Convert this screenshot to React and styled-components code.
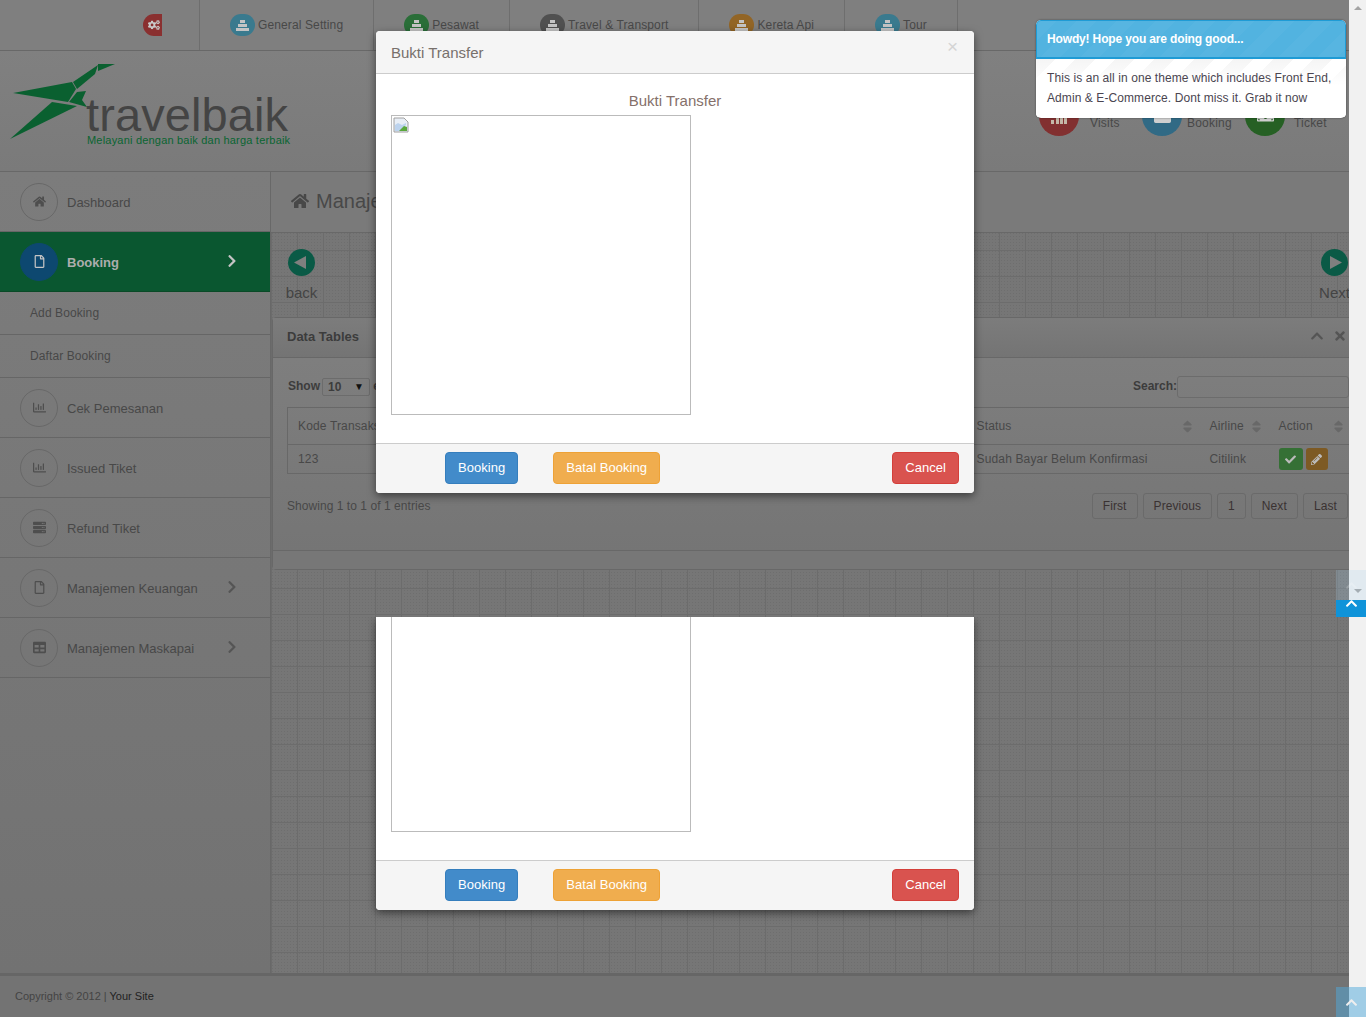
import {
  FaCheck,
  FaChevronRight,
  FaChevronUp,
  FaCogs,
  FaFolder,
  FaHome,
  FaMoneyBill,
  FaPencilAlt,
  FaRegChartBar,
  FaRegFile,
  FaServer,
  FaSort,
  FaTable,
  FaTimes,
} from "react-icons/fa";
import styled, { createGlobalStyle } from "styled-components";

const GlobalStyle = createGlobalStyle`
  html, body {
    margin: 0;
    height: 1017px;
    overflow: hidden;
    font-family: "Liberation Sans", Arial, sans-serif;
    font-size: 12px;
    color: #484848;
  }
  * { box-sizing: border-box; }
`;

const Screen = styled.div`
  position: relative;
  width: 1366px;
  height: 1017px;
  display: flex;
  overflow: hidden;
`;

const Page = styled.div`
  width: 1349px;
  height: 1017px;
  display: flex;
  flex-direction: column;
  overflow: hidden;
  background: #787878;
`;

/* top nav */
const TopBar = styled.nav`
  height: 51px;
  flex: none;
  display: flex;
  background: #7f7f7f;
  border-bottom: 1px solid #686868;
`;

const HomeCell = styled.div`
  width: 200px;
  padding: 14px 0 0 143px;
  border-right: 1px solid #6e6e6e;
`;

const RedTile = styled.div`
  width: 19px;
  height: 22px;
  border-radius: 11px 0 0 11px;
  background: #8a3030;
  color: #c9c9c9;
  font-size: 12px;
  display: flex;
  align-items: center;
  justify-content: center;
  padding-left: 3px;
`;

const NavItem = styled.div`
  display: flex;
  align-items: flex-start;
  gap: 3px;
  padding: 14px 30px 0;
  border-right: 1px solid #6e6e6e;
  letter-spacing: 0.12px;
  line-height: 22px;
`;

const NavDot = styled.div`
  width: 25px;
  height: 22px;
  border-radius: 12px;
  background: ${(p) => p.$color};
  display: flex;
  align-items: center;
  justify-content: center;
`;

/* logo row */
const Masthead = styled.header`
  height: 121px;
  flex: none;
  display: flex;
  justify-content: space-between;
  background: linear-gradient(#808080, #7a7a7a);
  border-bottom: 1px solid #686868;
`;

const Logo = styled.div`
  display: grid;
  width: 300px;
  height: 120px;
  & > * {
    grid-area: 1 / 1;
  }
`;

const LogoText = styled.div`
  padding: 45px 0 0 86px;
  color: #444;
  font-size: 47px;
  line-height: 38px;
  letter-spacing: 0.1px;
`;

const LogoTag = styled.div`
  padding: 83px 0 0 87px;
  color: #0a6532;
  font-size: 11px;
  line-height: 12px;
  letter-spacing: 0.2px;
  white-space: nowrap;
`;

const Stats = styled.div`
  display: flex;
  padding: 45px 0 0;
  width: 310px;
`;

const Stat = styled.div`
  width: 103px;
  height: 40px;
  display: flex;
  gap: ${(p) => p.$gap}px;
  font-size: 12px;
  letter-spacing: 0.2px;
`;

const StatDot = styled.div`
  width: 40px;
  height: 40px;
  flex: none;
  border-radius: 50%;
  background: ${(p) => p.$color};
  color: #cfcfcf;
  font-size: 17px;
  display: flex;
  align-items: center;
  justify-content: center;
`;

const StatLabel = styled.span`
  padding-top: 19px;
  line-height: 16px;
`;

/* body */
const Body = styled.div`
  flex: 1;
  display: flex;
  min-height: 0;
`;

const Sidebar = styled.aside`
  width: 271px;
  flex: none;
  background: linear-gradient(#7c7c7c, #727272);
  border-right: 1px solid #686868;
`;

const MenuItem = styled.div`
  height: 60px;
  display: flex;
  align-items: center;
  padding: 0 31px 0 20px;
  gap: 9px;
  border-bottom: 1px solid ${(p) => (p.$active ? "#0a4a27" : "#666")};
  background: ${(p) => (p.$active ? "#0a5730" : "transparent")};
  color: ${(p) => (p.$active ? "#adadad" : "#484848")};
  font-weight: ${(p) => (p.$active ? "bold" : "normal")};
  font-size: 13px;
`;

const MenuCircle = styled.div`
  width: 38px;
  height: 38px;
  flex: none;
  border-radius: 50%;
  border: 1px solid ${(p) => (p.$active ? "#0d4870" : "#686868")};
  background: ${(p) => (p.$active ? "#0d4870" : "transparent")};
  color: ${(p) => (p.$active ? "#c4c4c4" : "#4e4e4e")};
  font-size: 13px;
  display: flex;
  align-items: center;
  justify-content: center;
`;

const MenuLabel = styled.span`
  flex: 1;
  padding-top: 2px;
`;

const MenuArrow = styled.span`
  font-size: 14px;
  color: ${(p) => (p.$active ? "#c4c4c4" : "#555")};
  display: flex;
  margin-top: -2px;
`;

const SubItem = styled.div`
  height: 43px;
  padding: 0 0 0 30px;
  display: flex;
  align-items: center;
  border-bottom: 1px solid #666;
  letter-spacing: 0.1px;
`;

const Main = styled.main`
  flex: 1;
  min-width: 0;
  display: flex;
  flex-direction: column;
  overflow: hidden;
  background-color: #767676;
  background-image: linear-gradient(#6c6c6c 1px, transparent 1px),
    linear-gradient(90deg, #6c6c6c 1px, transparent 1px),
    radial-gradient(#6e6e6e 0.8px, transparent 1px);
  background-size: 26px 26px, 26px 26px, 3px 3px;
`;

const PageHead = styled.div`
  height: 61px;
  flex: none;
  padding: 0 0 2px 20px;
  display: flex;
  align-items: center;
  gap: 7px;
  background: #7a7a7a;
  border-bottom: 1px solid #686868;
  font-size: 20px;
  color: #484848;
  white-space: nowrap;
  svg {
    font-size: 18px;
  }
`;

const PagerRow = styled.div`
  width: 1080px;
  height: 84px;
  flex: none;
  display: flex;
  justify-content: space-between;
  padding: 16px 0 0 14px;
`;

const PagerLink = styled.div`
  width: 33px;
  display: flex;
  flex-direction: column;
  align-items: center;
  gap: 8px;
  font-size: 15px;
  line-height: 18px;
  color: #444;
`;

const Panel = styled.section`
  width: 1093px;
  flex: none;
  margin-left: 1px;
  border: 1px solid #686868;
  border-radius: 4px;
  background: #7a7a7a;
`;

const PanelHead = styled.div`
  height: 40px;
  display: flex;
  align-items: center;
  justify-content: space-between;
  padding: 0 17px 3px 14px;
  border-bottom: 1px solid #686868;
  background: linear-gradient(#7c7c7c, #747474);
`;

const PanelTitle = styled.h2`
  margin: 0;
  font-size: 13px;
  color: #3c3c3c;
`;

const PanelTools = styled.div`
  display: flex;
  gap: 9px;
  color: #555;
  font-size: 14px;
`;

const PanelBody = styled.div`
  height: 193px;
  padding: 17px 15px 0 14px;
  background: linear-gradient(#7e7e7e, #757575);
  border-bottom: 1px solid #686868;
`;

const ToolRow = styled.div`
  height: 22px;
  padding: 1px 0 0 1px;
  display: flex;
  justify-content: space-between;
  align-items: center;
  font-weight: bold;
  color: #3c3c3c;
  small {
    font-size: 10px;
    color: #111;
  }
`;

const LenSelect = styled.span`
  display: inline-flex;
  justify-content: space-between;
  align-items: center;
  width: 48px;
  height: 18px;
  margin-left: 2px;
  padding: 0 5px;
  border: 1px solid #6c6c6c;
  border-radius: 2px;
  vertical-align: middle;
`;

const SearchBox = styled.span`
  display: inline-block;
  width: 172px;
  height: 22px;
  border: 1px solid #6c6c6c;
  border-radius: 3px;
  vertical-align: middle;
`;

const Table = styled.table`
  width: 1063px;
  margin-top: 10px;
  table-layout: fixed;
  border-collapse: collapse;
  border: 1px solid #686868;
  border-right: 0;
  letter-spacing: 0.15px;
`;

const HeadCell = styled.th`
  height: 37px;
  padding: 0 5px 0 10px;
  text-align: left;
  font-weight: normal;
  border-bottom: 1px solid #686868;
  white-space: nowrap;
`;

const HeadInner = styled.div`
  display: flex;
  align-items: center;
  justify-content: space-between;
  svg {
    color: #686868;
    font-size: 15px;
  }
`;

const Cell = styled.td`
  height: 29px;
  padding: 0 10px;
  border-bottom: 1px solid #686868;
`;

const ActionBtn = styled.span`
  display: inline-flex;
  align-items: center;
  justify-content: center;
  width: ${(p) => p.$w}px;
  height: 22px;
  margin-right: 3px;
  border-radius: 3px;
  background: ${(p) => p.$color};
  color: #bbb;
  font-size: 11px;
  vertical-align: middle;
`;

const FootRow = styled.div`
  display: flex;
  justify-content: space-between;
  margin-top: 19px;
  letter-spacing: 0.05px;
`;

const Showing = styled.span`
  padding-top: 6px;
`;

const PageButtons = styled.div`
  display: flex;
  gap: 5px;
  padding-right: 1px;
  letter-spacing: 0.1px;
`;

const PageBtn = styled.span`
  height: 26px;
  padding: 0 10px;
  display: flex;
  align-items: center;
  border: 1px solid #6a6a6a;
  border-radius: 3px;
  color: #3a3232;
`;

const PanelFoot = styled.div`
  height: 18px;
  background: #777;
`;

const Footer = styled.footer`
  height: 44px;
  flex: none;
  padding: 13px 15px 0;
  border-top: 3px solid #666;
  background: #737373;
  font-size: 11px;
  line-height: 14px;
  color: #444;
  b {
    font-weight: normal;
    color: #222;
  }
`;

const ScrollTrack = styled.div`
  width: 17px;
  flex: none;
  display: flex;
  flex-direction: column;
  align-items: center;
  background: #f1f1f1;
`;

const ScrollArrow = styled.i`
  width: 0;
  height: 0;
  margin-top: ${(p) => p.$top}px;
  border-left: 4px solid transparent;
  border-right: 4px solid transparent;
  ${(p) =>
    p.$down
      ? "border-top: 4px solid #a3a3a3;"
      : "border-bottom: 4px solid #a3a3a3;"}
`;

/* things that lie over the page */
const Modal = styled.div`
  position: absolute;
  left: 376px;
  width: 598px;
  top: ${(p) => p.$top}px;
  height: ${(p) => p.$height}px;
  display: flex;
  flex-direction: column;
  background: #fff;
  border-radius: ${(p) => (p.$cut ? "0 0 4px 4px" : "4px")};
  box-shadow: 0 3px 9px rgba(0, 0, 0, 0.5);
  ${(p) => p.$cut && "clip-path: inset(0 -20px -20px -20px);"}
`;

const ModalHead = styled.div`
  height: 43px;
  flex: none;
  display: flex;
  justify-content: space-between;
  padding: 13px 15px 0;
  background: #f5f5f5;
  border-bottom: 1px solid #ccc;
  border-radius: 4px 4px 0 0;
  color: #77706c;
  font-size: 15px;
  line-height: 18px;
`;

const CloseBtn = styled.span`
  margin: -7px 1px 0 0;
  font-size: 19px;
  line-height: 20px;
  color: #d4d4d4;
`;

const ModalBody = styled.div`
  flex: 1;
  min-height: 0;
  padding: 0 15px;
`;

const ProofTitle = styled.h4`
  margin: 0;
  padding-top: 19px;
  text-align: center;
  height: 41px;
  font-size: 15px;
  font-weight: normal;
  line-height: 16px;
  color: #85706a;
`;

const ProofImage = styled.div`
  width: 300px;
  height: ${(p) => p.$height}px;
  border: 1px solid #bbb;
  ${(p) => p.$cut && "border-top: 0;"}
  padding: 1px 0 0 1px;
`;

const ModalFoot = styled.div`
  height: 50px;
  flex: none;
  display: flex;
  align-items: center;
  padding: 0 15px 2px 69px;
  background: #f5f5f5;
  border-top: 1px solid #ccc;
  border-radius: 0 0 4px 4px;
`;

const Button = styled.button`
  height: 32px;
  padding: 0 12px;
  margin-right: ${(p) => p.$mr || 0}px;
  margin-left: ${(p) => (p.$push ? "auto" : 0)};
  border: 1px solid ${(p) => p.$border};
  border-radius: 4px;
  background: ${(p) => p.$color};
  color: #fff;
  font-family: inherit;
  font-size: 13px;
  letter-spacing: 0.04px;
`;

const Toast = styled.div`
  position: absolute;
  left: 1036px;
  top: 20px;
  width: 310px;
  height: 98px;
  border-radius: 5px;
  background: #fff;
  box-shadow: 0 0 2px rgba(0, 0, 0, 0.5);
  overflow: hidden;
`;

const ToastHead = styled.div`
  height: 39px;
  padding: 0 10px;
  display: flex;
  align-items: center;
  border: 1px solid #1f9bd5;
  border-radius: 5px 5px 0 0;
  border-bottom-width: 2px;
  background-color: #52b3e0;
  background-image: repeating-linear-gradient(
    135deg,
    rgba(255, 255, 255, 0.03) 0 14px,
    transparent 14px 28px
  );
  color: #fff;
  font-weight: bold;
  letter-spacing: -0.15px;
`;

const ToastBody = styled.div`
  padding: 9px 11px;
  font-size: 12px;
  line-height: 20px;
  color: #4a4550;
  letter-spacing: 0.08px;
  background-image: linear-gradient(rgba(255, 255, 255, 0), #fff 26px),
    repeating-linear-gradient(135deg, #f5f5f5 0 14px, transparent 14px 28px);
`;

const ScrollTop = styled.div`
  position: absolute;
  left: 1336px;
  width: 30px;
  top: ${(p) => p.$top}px;
  height: ${(p) => p.$height}px;
  display: flex;
  justify-content: center;
  align-items: ${(p) => p.$align || "center"};
  background: ${(p) => p.$bg};
  color: ${(p) => p.$ink};
  font-size: 13px;
  svg {
    margin-top: ${(p) => p.$shift || 0}px;
  }
`;

const NavGlyph = () => (
  <svg width="13" height="11" viewBox="0 0 13 11" fill="#c4c4c4">
    <rect x="4" y="0" width="5" height="3" />
    <rect x="2" y="4" width="9" height="3" />
    <rect x="0" y="8" width="13" height="3" />
  </svg>
);

const LogoMark = () => (
  <svg width="300" height="120" viewBox="0 51 300 120" fill="#0a6030">
    <polygon points="98,64 115,64 98,71" />
    <polygon points="98,65 73,82 77,89 95,74" />
    <polygon points="13,93 72,82 76,89 68,102" />
    <polygon points="86,91 77,92 69,102 87,107 82,100" />
    <polygon points="52,102 77,106 10,139" />
  </svg>
);

const VisitBars = () => (
  <svg width="18" height="18" viewBox="0 0 18 18" fill="#c4b8a8">
    <rect x="1" y="13" width="3" height="4" />
    <rect x="6" y="10" width="3" height="7" />
    <rect x="10" y="9" width="3" height="8" />
    <rect x="14" y="9" width="3" height="8" />
  </svg>
);

const RoundPlay = ({ back }) => (
  <svg width="27" height="27" viewBox="0 0 27 27">
    <circle cx="13.5" cy="13.5" r="13.5" fill="#0a5a46" />
    <polygon
      points={back ? "6,13.5 18,7 18,20" : "21,13.5 9,7 9,20"}
      fill="#7f7f7f"
    />
  </svg>
);

const BrokenImage = () => (
  <svg width="16" height="16" viewBox="0 0 16 16">
    <path d="M1 1h10l4 4v10H1z" fill="#e8eef6" stroke="#a0a0a0" />
    <path d="M2 8l3-2 4 2 4-2v2l-6 6H2z" fill="#bcd3ee" />
    <path d="M6 14l5-5 3 1v4z" fill="#5aa83c" />
  </svg>
);

const navItems = [
  { label: "General Setting", color: "#3a7a8e" },
  { label: "Pesawat", color: "#2a6e38" },
  { label: "Travel & Transport", color: "#505050" },
  { label: "Kereta Api", color: "#926526" },
  { label: "Tour", color: "#3a7a8e" },
];

const ProofFooter = () => (
  <ModalFoot>
    <Button $color="#428bca" $border="#357ebd" $mr={35}>
      Booking
    </Button>
    <Button $color="#f0ad4e" $border="#eea236">
      Batal Booking
    </Button>
    <Button $color="#d9534f" $border="#d43f3a" $push>
      Cancel
    </Button>
  </ModalFoot>
);

const App = () => {
  return (
    <Screen>
      <GlobalStyle />
      <Page>
        <TopBar>
          <HomeCell>
            <RedTile>
              <FaCogs />
            </RedTile>
          </HomeCell>
          {navItems.map((item) => (
            <NavItem key={item.label}>
              <NavDot $color={item.color}>
                <NavGlyph />
              </NavDot>
              {item.label}
            </NavItem>
          ))}
        </TopBar>

        <Masthead>
          <Logo>
            <LogoMark />
            <LogoText>travelbaik</LogoText>
            <LogoTag>Melayani dengan baik dan harga terbaik</LogoTag>
          </Logo>
          <Stats>
            <Stat $gap={11}>
              <StatDot $color="#823030">
                <VisitBars />
              </StatDot>
              <StatLabel>Visits</StatLabel>
            </Stat>
            <Stat $gap={5}>
              <StatDot $color="#316a85">
                <FaFolder />
              </StatDot>
              <StatLabel>Booking</StatLabel>
            </Stat>
            <Stat $gap={9}>
              <StatDot $color="#266024">
                <FaMoneyBill />
              </StatDot>
              <StatLabel>Ticket</StatLabel>
            </Stat>
          </Stats>
        </Masthead>

        <Body>
          <Sidebar>
            <MenuItem>
              <MenuCircle>
                <FaHome />
              </MenuCircle>
              <MenuLabel>Dashboard</MenuLabel>
            </MenuItem>
            <MenuItem $active>
              <MenuCircle $active>
                <FaRegFile />
              </MenuCircle>
              <MenuLabel>Booking</MenuLabel>
              <MenuArrow $active>
                <FaChevronRight />
              </MenuArrow>
            </MenuItem>
            <SubItem>Add Booking</SubItem>
            <SubItem>Daftar Booking</SubItem>
            <MenuItem>
              <MenuCircle>
                <FaRegChartBar />
              </MenuCircle>
              <MenuLabel>Cek Pemesanan</MenuLabel>
            </MenuItem>
            <MenuItem>
              <MenuCircle>
                <FaRegChartBar />
              </MenuCircle>
              <MenuLabel>Issued Tiket</MenuLabel>
            </MenuItem>
            <MenuItem>
              <MenuCircle>
                <FaServer />
              </MenuCircle>
              <MenuLabel>Refund Tiket</MenuLabel>
            </MenuItem>
            <MenuItem>
              <MenuCircle>
                <FaRegFile />
              </MenuCircle>
              <MenuLabel>Manajemen Keuangan</MenuLabel>
              <MenuArrow>
                <FaChevronRight />
              </MenuArrow>
            </MenuItem>
            <MenuItem>
              <MenuCircle>
                <FaTable />
              </MenuCircle>
              <MenuLabel>Manajemen Maskapai</MenuLabel>
              <MenuArrow>
                <FaChevronRight />
              </MenuArrow>
            </MenuItem>
          </Sidebar>

          <Main>
            <PageHead>
              <FaHome />
              Manajemen Booking
            </PageHead>
            <PagerRow>
              <PagerLink>
                <RoundPlay back />
                back
              </PagerLink>
              <PagerLink>
                <RoundPlay />
                Next
              </PagerLink>
            </PagerRow>
            <Panel>
              <PanelHead>
                <PanelTitle>Data Tables</PanelTitle>
                <PanelTools>
                  <FaChevronUp />
                  <FaTimes />
                </PanelTools>
              </PanelHead>
              <PanelBody>
                <ToolRow>
                  <span>
                    Show
                    <LenSelect>
                      10 <small>▼</small>
                    </LenSelect>{" "}
                    entries
                  </span>
                  <span>
                    Search:
                    <SearchBox />
                  </span>
                </ToolRow>
                <Table>
                  <colgroup>
                    <col style={{ width: 679 }} />
                    <col style={{ width: 233 }} />
                    <col style={{ width: 69 }} />
                    <col style={{ width: 82 }} />
                  </colgroup>
                  <thead>
                    <tr>
                      <HeadCell>
                        <HeadInner>
                          Kode Transaksi <FaSort />
                        </HeadInner>
                      </HeadCell>
                      <HeadCell>
                        <HeadInner>
                          Status <FaSort />
                        </HeadInner>
                      </HeadCell>
                      <HeadCell>
                        <HeadInner>
                          Airline <FaSort />
                        </HeadInner>
                      </HeadCell>
                      <HeadCell>
                        <HeadInner>
                          Action <FaSort />
                        </HeadInner>
                      </HeadCell>
                    </tr>
                  </thead>
                  <tbody>
                    <tr>
                      <Cell>123</Cell>
                      <Cell>Sudah Bayar Belum Konfirmasi</Cell>
                      <Cell>Citilink</Cell>
                      <Cell>
                        <ActionBtn $w={24} $color="#357035">
                          <FaCheck />
                        </ActionBtn>
                        <ActionBtn $w={22} $color="#7d5a24">
                          <FaPencilAlt />
                        </ActionBtn>
                      </Cell>
                    </tr>
                  </tbody>
                </Table>
                <FootRow>
                  <Showing>Showing 1 to 1 of 1 entries</Showing>
                  <PageButtons>
                    <PageBtn>First</PageBtn>
                    <PageBtn>Previous</PageBtn>
                    <PageBtn>1</PageBtn>
                    <PageBtn>Next</PageBtn>
                    <PageBtn>Last</PageBtn>
                  </PageButtons>
                </FootRow>
              </PanelBody>
              <PanelFoot />
            </Panel>
          </Main>
        </Body>

        <Footer>
          Copyright © 2012 | <b>Your Site</b>
        </Footer>
      </Page>

      <ScrollTrack>
        <ScrollArrow $top={6} />
        <ScrollArrow $top={579} $down />
      </ScrollTrack>

      <Modal $top={31} $height={462}>
        <ModalHead>
          Bukti Transfer
          <CloseBtn>×</CloseBtn>
        </ModalHead>
        <ModalBody>
          <ProofTitle>Bukti Transfer</ProofTitle>
          <ProofImage $height={300}>
            <BrokenImage />
          </ProofImage>
        </ModalBody>
        <ProofFooter />
      </Modal>

      <Modal $top={617} $height={293} $cut>
        <ModalBody>
          <ProofImage $cut $height={215} />
        </ModalBody>
        <ProofFooter />
      </Modal>

      <Toast>
        <ToastHead>Howdy! Hope you are doing good...</ToastHead>
        <ToastBody>
          This is an all in one theme which includes Front End, Admin &amp;
          E-Commerce. Dont miss it. Grab it now
        </ToastBody>
      </Toast>

      <ScrollTop $top={570} $height={30} $bg="rgba(170, 210, 235, 0.22)" $ink="rgba(255, 255, 255, 0.2)">
        <FaChevronUp />
      </ScrollTop>
      <ScrollTop $top={600} $height={17} $bg="#0f93d9" $ink="#fff" $align="flex-start" $shift={-3}>
        <FaChevronUp />
      </ScrollTop>
      <ScrollTop $top={987} $height={30} $bg="rgba(80, 170, 220, 0.5)" $ink="#eee">
        <FaChevronUp />
      </ScrollTop>
    </Screen>
  );
};

export default App;
